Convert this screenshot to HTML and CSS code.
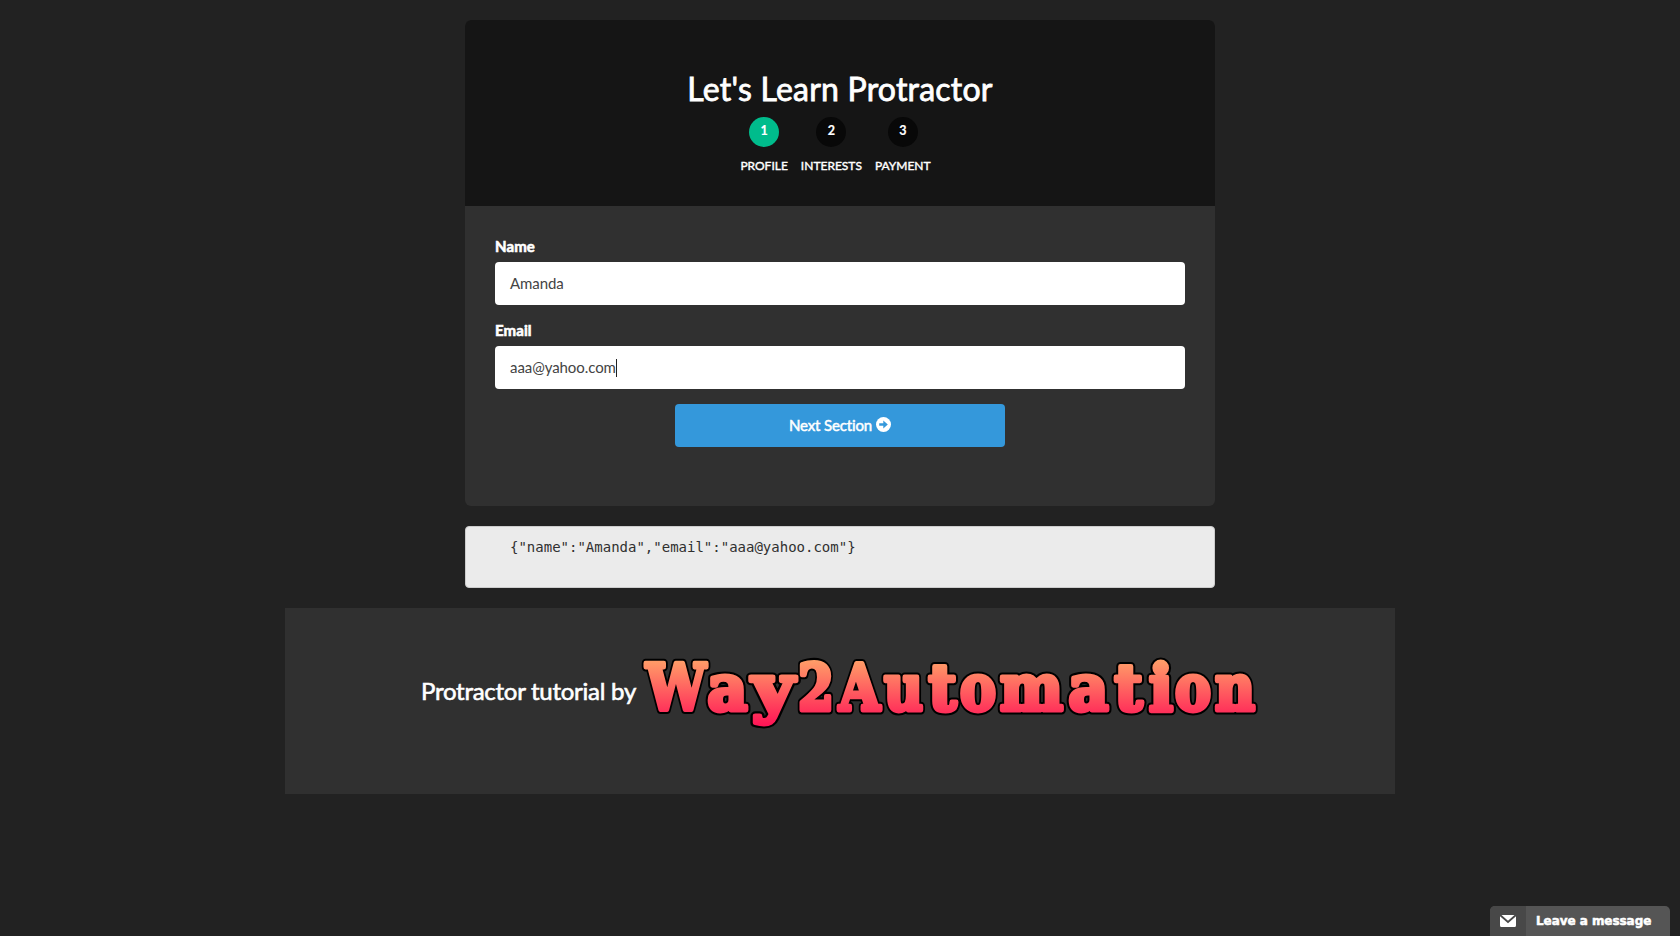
FILE: index.html
```html
<!DOCTYPE html>
<html lang="en">
<head>
<meta charset="utf-8">
<title>Let's Learn Protractor</title>
<link rel="stylesheet" href="styles.css">
</head>
<body>
<main class="page">
  <section class="card">
    <header class="card-header">
      <h2 class="title">Let's Learn Protractor</h2>
      <nav class="steps">
        <a class="step active"><span class="num">1</span><span class="step-label">PROFILE</span></a>
        <a class="step"><span class="num">2</span><span class="step-label">INTERESTS</span></a>
        <a class="step"><span class="num">3</span><span class="step-label">PAYMENT</span></a>
      </nav>
    </header>
    <form class="form">
      <label class="label">Name</label>
      <div class="field">Amanda</div>
      <label class="label">Email</label>
      <div class="field">aaa@yahoo.com<span class="caret"></span></div>
      <div class="button">
        <span class="button-text">Next Section</span>
        <svg class="arrow" viewBox="0 0 15 15"><circle cx="7.5" cy="7.5" r="7.5" fill="#fff"/><path d="M3.2 6.2h4.1V3.4l4.5 4.1-4.5 4.1V8.8H3.2z" fill="#3498db"/></svg>
      </div>
    </form>
  </section>
  <pre class="output">{"name":"Amanda","email":"aaa@yahoo.com"}</pre>
  <footer class="footer">
    <span class="credit">Protractor tutorial by</span>
    <svg class="logo" viewBox="640 654 622 80">
      <defs>
        <linearGradient id="sunset" gradientUnits="userSpaceOnUse" x1="0" y1="657" x2="0" y2="729">
          <stop offset="0" stop-color="#ffa569"/><stop offset="1" stop-color="#ff0d55"/>
        </linearGradient>
      </defs>
      <use href="#wordmark" class="logo-outline"/>
      <g class="logo-fill"><text id="wordmark" y="709.5"><tspan x="646" textLength="60" lengthAdjust="spacingAndGlyphs">W</tspan><tspan x="707.5" textLength="40" lengthAdjust="spacingAndGlyphs">a</tspan><tspan x="752" textLength="42" lengthAdjust="spacingAndGlyphs">y</tspan><tspan x="798" textLength="36" lengthAdjust="spacingAndGlyphs">2</tspan><tspan x="839" textLength="41" lengthAdjust="spacingAndGlyphs">A</tspan><tspan x="884" textLength="39" lengthAdjust="spacingAndGlyphs">u</tspan><tspan x="928.5" textLength="28" lengthAdjust="spacingAndGlyphs">t</tspan><tspan x="960" textLength="36" lengthAdjust="spacingAndGlyphs">o</tspan><tspan x="1000" textLength="63" lengthAdjust="spacingAndGlyphs">m</tspan><tspan x="1068.5" textLength="40" lengthAdjust="spacingAndGlyphs">a</tspan><tspan x="1114.5" textLength="28" lengthAdjust="spacingAndGlyphs">t</tspan><tspan x="1149" textLength="24" lengthAdjust="spacingAndGlyphs">i</tspan><tspan x="1175" textLength="36" lengthAdjust="spacingAndGlyphs">o</tspan><tspan x="1215" textLength="40" lengthAdjust="spacingAndGlyphs">n</tspan></text></g>
    </svg>
  </footer>
</main>
<aside class="chat">
  <div class="chat-icon"><svg class="mail" viewBox="0 0 16 12"><path d="M1.500 0h13L8 5.800z" fill="#fff"/><path d="M0 1.200l8 7.100 8-7.100V10.500q0 1.500-1.500 1.500h-13Q0 12 0 10.500z" fill="#fff"/></svg></div>
  <div class="chat-text">Leave a message</div>
</aside>
</body>
</html>
```
FILE: styles.css
```css
* { box-sizing: border-box; }
body {
  margin: 0;
  height: 936px;
  overflow: hidden;
  background: #222;
  color: #fff;
  font: 15px/21px Lato, sans-serif;
}
.page {
  display: flex;
  flex-direction: column;
  align-items: center;
  gap: 20px;
  padding-top: 20px;
}
.card { width: 750px; height: 486px; border-radius: 6px; background: #303030; overflow: hidden; }
.card-header { height: 186px; padding-top: 51px; background: #151515; }
.title {
  margin: 0;
  font-size: 32px;
  line-height: 35px;
  font-weight: 400;
  letter-spacing: .22px;
  text-align: center;
  -webkit-text-stroke: .8px #fff;
}
.steps { display: flex; justify-content: center; gap: 13px; padding: 11px 9px 0 0; }
.step { display: flex; flex-direction: column; align-items: center; font-size: 12px; }
.num {
  width: 30px;
  height: 30px;
  border-radius: 50%;
  background: #080808;
  font-size: 12.500px;
  font-weight: 700;
  line-height: 27px;
  text-align: center;
  -webkit-text-stroke: .2px #fff;
}
.active .num { background: #00bc8c; }
.step-label { margin-top: 8px; -webkit-text-stroke: .4px #fff; }
.form { padding: 30px; }
.label {
  display: block;
  margin-bottom: 5px;
  font-weight: 700;
  letter-spacing: .1px;
  -webkit-text-stroke: .6px #fff;
}
.field {
  display: flex;
  align-items: center;
  height: 43px;
  margin-bottom: 15px;
  padding: 0 15px;
  border-radius: 4px;
  background: #fff;
  color: #444;
  letter-spacing: -.07px;
}
.caret { width: 1px; height: 18px; background: #222; }
.button {
  display: flex;
  align-items: center;
  justify-content: center;
  gap: 4px;
  width: 330px;
  height: 43px;
  margin: 0 auto;
  border-radius: 4px;
  background: #3498db;
  letter-spacing: -.15px;
  -webkit-text-stroke: .5px #fff;
}
.arrow { width: 15px; height: 15px; margin-bottom: 2px; }
.output {
  width: 750px;
  height: 62px;
  margin: 0;
  padding: 10px 44px;
  border: 1px solid #ccc;
  border-radius: 4px;
  background: #ebebeb;
  color: #303030;
  font: 14px/20px "DejaVu Sans Mono", monospace;
}
.footer {
  display: flex;
  align-items: flex-start;
  width: 1110px;
  height: 186px;
  padding: 46px 0 0 136px;
  background: #303030;
}
.credit {
  width: 219px;
  padding-top: 23px;
  font-size: 24px;
  line-height: 28px;
  letter-spacing: -.26px;
  white-space: nowrap;
  -webkit-text-stroke: .6px #fff;
}
.logo {
  width: 622px;
  height: 80px;
  overflow: visible;
  font: 700 63px "DejaVu Serif", serif;
  stroke-linejoin: round;
}
.logo-outline { fill: #000; stroke: #000; stroke-width: 9px; }
.logo-fill { fill: url(#sunset); stroke: url(#sunset); stroke-width: 4.800px; }
.chat {
  position: absolute;
  right: 10px;
  bottom: 0;
  display: flex;
  width: 180px;
  height: 30px;
  border-radius: 5px 5px 0 0;
  background: #555;
  overflow: hidden;
}
.chat-icon { display: flex; align-items: center; justify-content: center; width: 36px; background: #484848; }
.mail { width: 16px; height: 12px; }
.chat-text {
  padding-left: 10px;
  font: 700 12px/30px "DejaVu Sans", sans-serif;
  letter-spacing: -.05px;
  white-space: nowrap;
  -webkit-text-stroke: .5px #fff;
}
```
